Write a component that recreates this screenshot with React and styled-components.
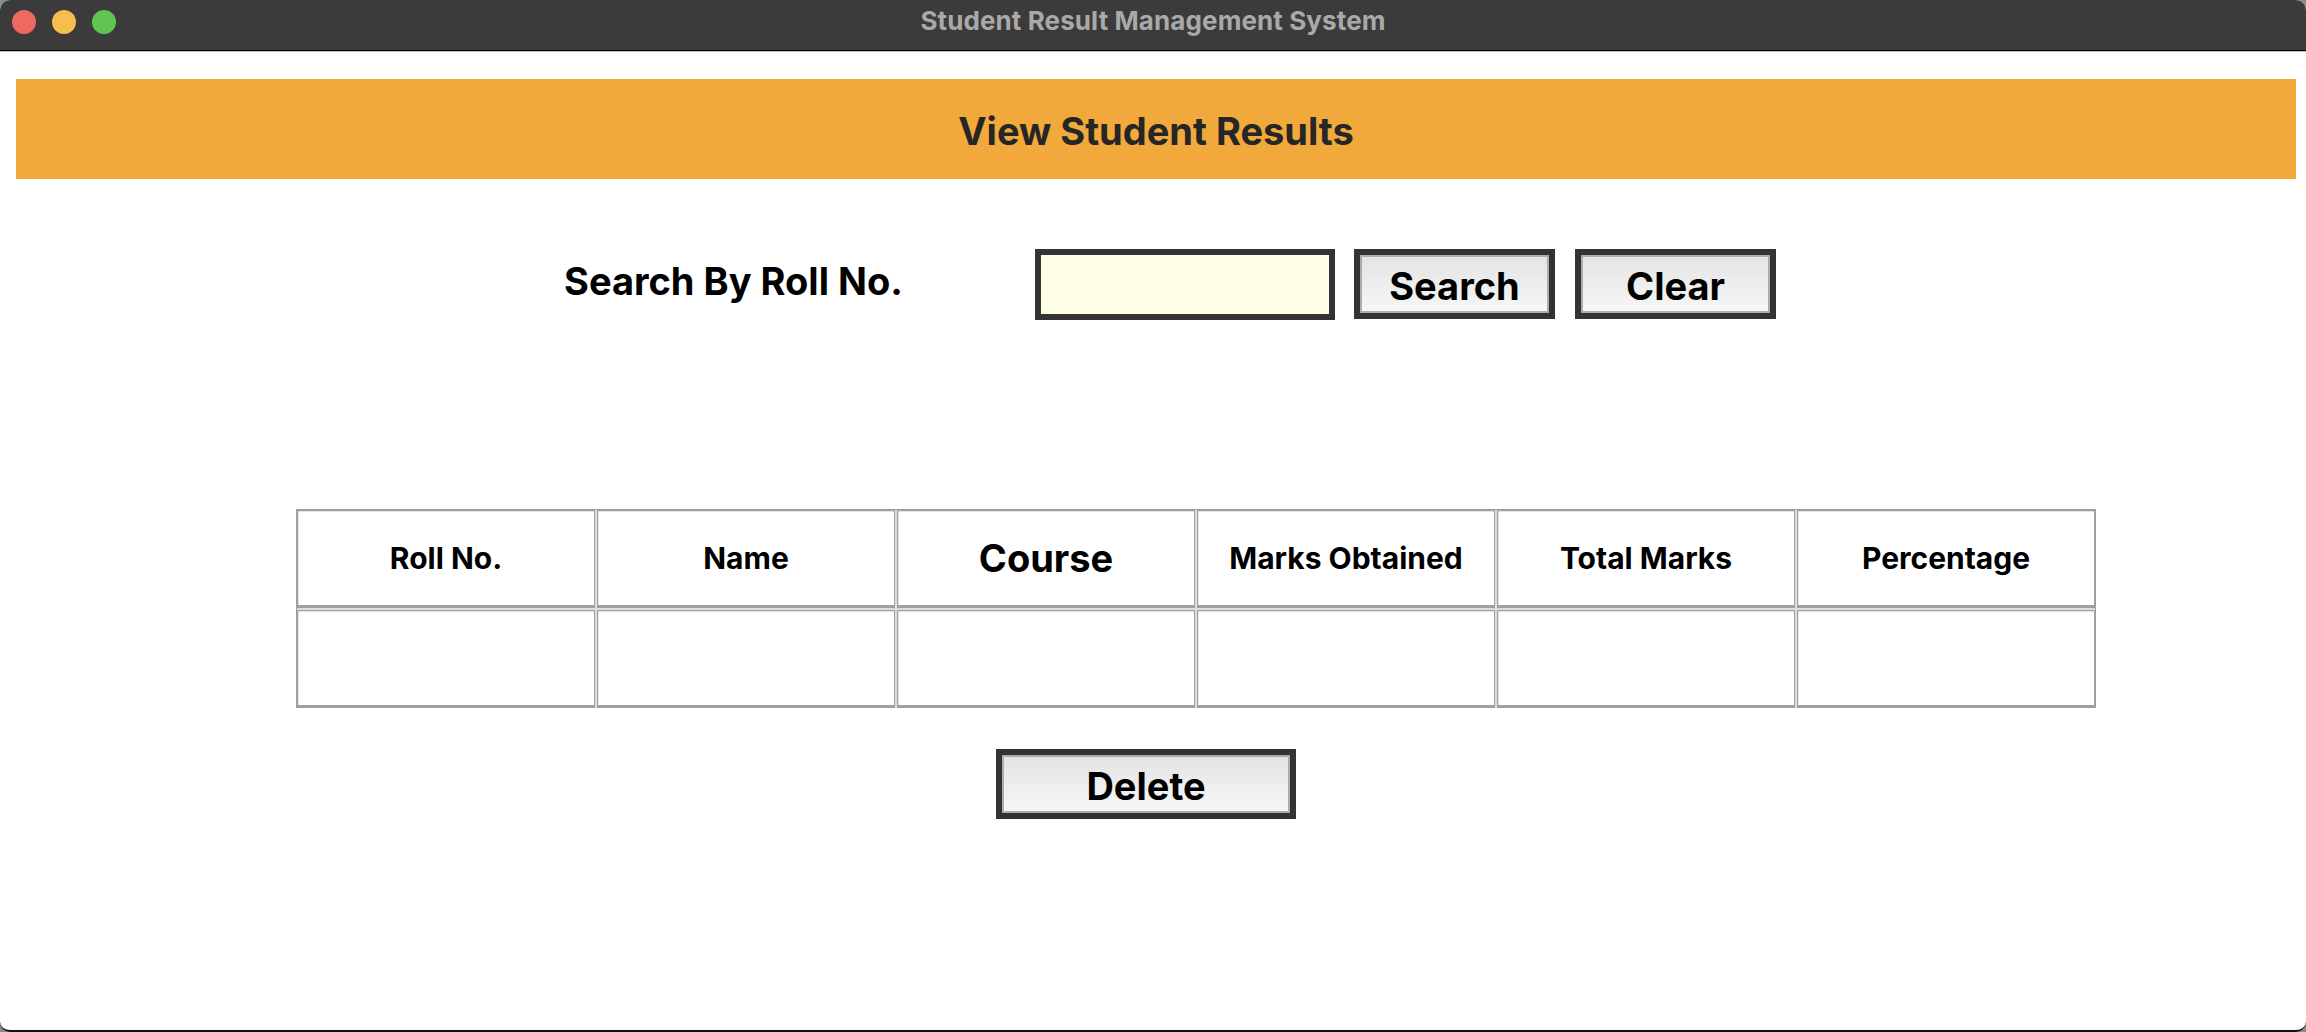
import React from 'react'
import styled, { createGlobalStyle } from 'styled-components'

const GlobalStyle = createGlobalStyle`
  html, body {
    margin: 0;
    padding: 0;
    background: #8c8c8c;
  }
  body {
    font-family: Inter, "Noto Sans", "Liberation Sans", sans-serif;
  }
`

const Window = styled.div`
  width: 2306px;
  height: 1032px;
  box-sizing: border-box;
  background: #fff;
  border-radius: 10px;
  border-bottom: 2px solid #111;
  overflow: hidden;
  display: flex;
  flex-direction: column;
`

const TitleBar = styled.div`
  height: 50px;
  flex-shrink: 0;
  background: #3b3b3b;
  border-bottom: 1px solid #000;
  box-shadow: 0 1px 0 #c4c4c4;
  display: grid;
  grid-template-columns: 1fr auto 1fr;
  align-items: center;
`

const Lights = styled.div`
  display: flex;
  gap: 16px;
  padding-left: 12px;
  margin-top: -6px;
`

const Light = styled.span`
  width: 24px;
  height: 24px;
  border-radius: 50%;
  background: ${props => props.color};
`

const WindowTitle = styled.div`
  color: #a9a9a9;
  font-size: 26px;
  font-weight: 700;
  letter-spacing: 0.1px;
  margin-top: -10px;
`

const Content = styled.div`
  padding: 28px 10px 0 16px;
  display: flex;
  flex-direction: column;
`

const Banner = styled.div`
  height: 100px;
  background: #f2a93b;
  display: flex;
  align-items: center;
  justify-content: center;
  color: #262626;
  font-size: 38px;
  font-weight: 700;
  padding-top: 3px;
  box-sizing: border-box;
`

const SearchRow = styled.div`
  margin-top: 70px;
  height: 70px;
  display: flex;
  align-items: center;
  padding-left: 548px;
`

const SearchLabel = styled.div`
  font-size: 38px;
  font-weight: 700;
  color: #000;
  width: 471px;
  margin-top: -6px;
`

const RollInput = styled.input`
  width: 300px;
  height: 71px;
  box-sizing: border-box;
  border: 6px solid #333;
  background: #ffffe8;
  outline: none;
  font: 30px Inter, sans-serif;
`

const Button = styled.button`
  width: 201px;
  height: 70px;
  box-sizing: border-box;
  margin-left: ${props => props.gap || 0}px;
  border: 6px solid #333;
  box-shadow: inset 0 0 0 2px #adadad;
  background: linear-gradient(#e3e3e3, #f7f7f7);
  color: #000;
  font-family: Inter, "Liberation Sans", sans-serif;
  font-size: 38px;
  font-weight: 700;
  padding: 4px 0 0;
  cursor: pointer;
`

const Table = styled.div`
  margin: 190px 0 0 280px;
  width: 1800px;
  box-sizing: border-box;
  display: grid;
  grid-template-columns: repeat(6, 1fr);
  grid-auto-rows: 98px;
  gap: 2px;
  background: #dedede;
  border: 1px solid #a0a0a0;
  border-bottom: none;
`

const Cell = styled.div`
  background: #fff;
  border: 1px solid #a0a0a0;
  border-bottom-width: 3px;
  box-shadow: inset 1px 1px 0 #e4e4e4;
  display: flex;
  align-items: center;
  justify-content: center;
  font-size: ${props => props.big ? 38 : 30}px;
  font-weight: 700;
  color: #000;
`

const DeleteButton = styled(Button)`
  margin: 41px 0 0 980px;
  width: 300px;
`

const columns = ['Roll No.', 'Name', 'Course', 'Marks Obtained', 'Total Marks', 'Percentage']

export default function App() {
  return (
    <>
      <GlobalStyle />
      <Window>
        <TitleBar>
          <Lights>
            <Light color="#ee6a5f" />
            <Light color="#f5be4f" />
            <Light color="#61c554" />
          </Lights>
          <WindowTitle>Student Result Management System</WindowTitle>
          <div />
        </TitleBar>
        <Content>
          <Banner>View Student Results</Banner>
          <SearchRow>
            <SearchLabel>Search By Roll No.</SearchLabel>
            <RollInput type="text" />
            <Button gap={19}>Search</Button>
            <Button gap={20}>Clear</Button>
          </SearchRow>
          <Table>
            {columns.map(c => (
              <Cell key={c} big={c === 'Course'}>{c}</Cell>
            ))}
            {columns.map(c => (
              <Cell key={'v' + c} />
            ))}
          </Table>
          <DeleteButton>Delete</DeleteButton>
        </Content>
      </Window>
    </>
  )
}
